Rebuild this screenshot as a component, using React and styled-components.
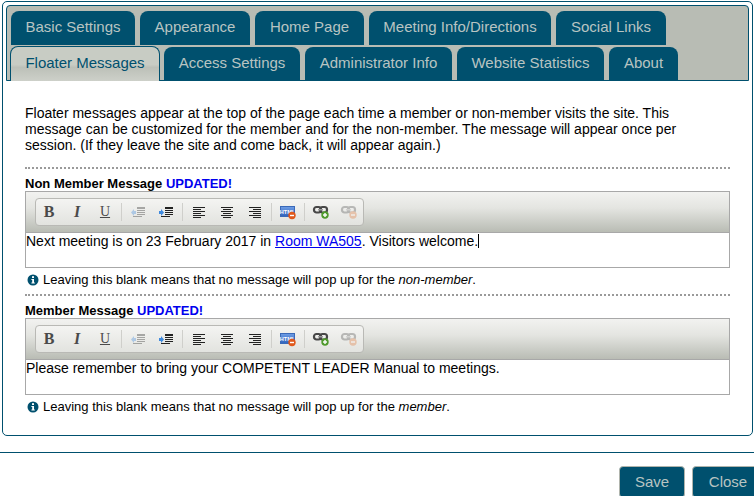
import React from 'react';
import styled, { createGlobalStyle } from 'styled-components';

const Global = createGlobalStyle`
  html, body { margin: 0; padding: 0; background: #fff; overflow: hidden; }
  body { font-family: "Liberation Sans", Arial, sans-serif; color: #000; }
`;

const Page = styled.div`
  width: 754px;
  height: 496px;
  overflow: hidden;
`;

const Panel = styled.div`
  box-sizing: border-box;
  width: 751px;
  height: 435px;
  margin: 1px 0 0 2px;
  padding: 3px;
  border: 1px solid #00506e;
  border-radius: 5px;
`;

const TabHeader = styled.div`
  box-sizing: border-box;
  width: 743px;
  height: 76px;
  padding: 5px 0 0 4px;
  background: #b8bcb4;
  border: 1px solid #00506e;
  border-radius: 4px 4px 0 0;
`;

const TabRow = styled.div`
  display: flex;
  gap: 5px;
  height: ${(p) => p.$h}px;
`;

// 선택된 탭은 아래 테두리를 덮는다
const Tab = styled.div`
  box-sizing: border-box;
  flex: none;
  height: ${(p) => (p.$active ? '35px' : `${p.$h}px`)};
  margin-top: ${(p) => (p.$active ? '0' : `${p.$top}px`)};
  margin-left: ${(p) => (p.$active ? '-1px' : '0')};
  margin-right: ${(p) => (p.$active ? '-1px' : '0')};
  width: ${(p) => p.$w}px;
  text-align: center;
  font-size: 15px;
  line-height: 31px;
  border-radius: 8px 8px 0 0;
  background: ${(p) =>
    p.$active ? 'linear-gradient(#c8ccc4 0, #c8ccc4 52%, #bcc0b8 60%, #cdd0c9 100%)' : '#00506e'};
  color: ${(p) => (p.$active ? '#00506e' : '#b8c4c2')};
  border: ${(p) => (p.$active ? '1px solid #00506e' : '0')};
  border-bottom: 0;
`;

const Content = styled.div`
  padding: 25px 19px 0 19px;
`;

const Intro = styled.p`
  margin: 0;
  font-size: 14px;
  line-height: 15.8px;
  height: 48px;
  width: 690px;
`;

const Divider = styled.div`
  height: 0;
  border-top: 2px dotted #9a9a9a;
  width: 705px;
  margin-top: ${(p) => p.$top}px;
`;

const Label = styled.div`
  font-size: 13px;
  font-weight: bold;
  line-height: 15px;
  margin: 7px 0 0 0;
`;

const Updated = styled.span`
  color: #0000ee;
`;

const Editor = styled.div`
  box-sizing: border-box;
  width: 705px;
  border: 1px solid #a8a8a8;
  height: 77px;
`;

const ToolArea = styled.div`
  box-sizing: border-box;
  height: 41px;
  padding: 6px 0 0 9px;
  background: linear-gradient(#f2f2f0 0, #e4e5e1 40%, #b9bcb4 100%);
  border-bottom: 1px solid #a8a8a8;
`;

const ToolPill = styled.div`
  box-sizing: border-box;
  display: flex;
  align-items: center;
  width: 329px;
  height: 28px;
  background: linear-gradient(#f4f4f2, #e2e3df);
  border: 1px solid #b9b9b5;
  border-radius: 4px;
`;

const ToolButton = styled.span`
  display: flex;
  align-items: center;
  justify-content: center;
  flex: none;
  width: 28px;
  height: 26px;
  font-family: "Liberation Serif", serif;
  font-size: ${(p) => (p.$under ? '14px' : '16px')};
  color: #4a4a4a;
  font-weight: ${(p) => (p.$bold ? 'bold' : 'normal')};
  font-style: ${(p) => (p.$italic ? 'italic' : 'normal')};
  text-decoration: ${(p) => (p.$under ? 'underline' : 'none')};
  &:first-child { margin-left: -1px; }
`;

const ToolSep = styled.span`
  flex: none;
  width: 1px;
  height: 18px;
  background: #cfcfcb;
  margin: 0 2px;
`;

const EditArea = styled.div`
  font-size: 14px;
  line-height: 16px;
  a { color: #0000ee; }
`;

const Caret = styled.span`
  display: inline-block;
  width: 1px;
  height: 14px;
  background: #000;
  vertical-align: -2px;
`;

const Note = styled.div`
  display: flex;
  align-items: center;
  gap: 4px;
  font-size: 13px;
  line-height: 15px;
  margin: 4px 0 0 2px;
`;

const Footer = styled.div`
  margin-top: 16px;
  border-top: 1px solid #00506e;
  display: flex;
  gap: 7px;
  padding: 13px 0 0 619px;
  width: 300px;
`;

const ActionButton = styled.div`
  box-sizing: border-box;
  flex: none;
  width: ${(p) => p.$w}px;
  height: 32px;
  background: #00506e;
  color: #b8c4c2;
  border: 1px solid #b0b4ac;
  border-radius: 4px;
  text-align: center;
  font-size: 15px;
  line-height: 29px;
`;

const offsets = {
  left: [0, 0, 0, 0, 0, 0],
  center: [0, 2, 0, 2, 0, 2],
  right: [0, 4, 0, 4, 0, 4],
};

const AlignIcon = ({ kind }) => (
  <svg width="14" height="13" viewBox="0 0 14 13">
    {offsets[kind].map((x, i) => (
      <rect key={i} x={x + 1} y={i * 2 + 1} width={i % 2 ? 8 : 12} height="1" fill="#222" />
    ))}
  </svg>
);

// 내어쓰기 / 들여쓰기
const IndentIcon = ({ out }) => (
  <svg width="16" height="13" viewBox="0 0 16 13" opacity={out ? 0.35 : 1}>
    <rect x="7" y="1" width="8" height="2" fill="#222" />
    <rect x="7" y="4" width="8" height="1" fill="#222" />
    <rect x="7" y="6" width="8" height="1" fill="#222" />
    <rect x="7" y="8" width="8" height="1" fill="#222" />
    <rect x="3" y="10" width="9" height="1" fill="#222" />
    <path
      d={out ? 'M6 5v3H4v2L1 6.500 4 3v2z' : 'M1 5h2V3l3 3.500-3 3.500V8H1z'}
      fill="#3f8ade"
    />
  </svg>
);

const HtmlIcon = () => (
  <svg width="18" height="16" viewBox="0 0 18 16">
    <defs>
      <linearGradient id="htmlBlue" x1="0" y1="0" x2="0" y2="1">
        <stop offset="0" stopColor="#6f9ee6" />
        <stop offset="1" stopColor="#2f62bb" />
      </linearGradient>
    </defs>
    <rect x="1.500" y="2.500" width="14" height="10" fill="url(#htmlBlue)" stroke="#3a69b8" />
    <text x="8.500" y="10" fontSize="5.500" fontWeight="bold" textAnchor="middle" fill="#fff" fontFamily="Liberation Sans">HTML</text>
    <circle cx="13" cy="11.500" r="3.700" fill="#e0591c" />
    <rect x="11" y="10.800" width="4" height="1.400" fill="#fff" />
  </svg>
);

const LinkIcon = ({ off }) => (
  <svg width="18" height="16" viewBox="0 0 18 16" opacity={off ? 0.32 : 1}>
    <rect x="2" y="3" width="7" height="5.500" rx="2.500" fill="none" stroke="#474747" strokeWidth="2.200" />
    <rect x="8" y="3" width="7" height="5.500" rx="2.500" fill="none" stroke="#474747" strokeWidth="2.200" />
    <rect x="6" y="5" width="5" height="1.500" fill="#999" />
    <circle cx="13" cy="11" r="3.700" fill={off ? '#e0702c' : '#4f9a2c'} />
    <rect x="11" y="10.300" width="4" height="1.400" fill="#fff" />
    {!off && <rect x="12.300" y="9" width="1.400" height="4" fill="#fff" />}
  </svg>
);

const InfoIcon = () => (
  <svg width="12" height="12" viewBox="0 0 12 12">
    <circle cx="6" cy="6" r="5.500" fill="#00506e" />
    <rect x="5" y="2.200" width="2" height="1.800" fill="#fff" />
    <path d="M4.400 5h2.600v3.400h.8v1H4.400v-1h.8V6h-.8z" fill="#fff" />
  </svg>
);

const Toolbar = () => (
  <ToolArea>
    <ToolPill>
      <ToolButton $bold>B</ToolButton>
      <ToolButton $bold $italic>I</ToolButton>
      <ToolButton $under>U</ToolButton>
      <ToolSep />
      <ToolButton><IndentIcon out /></ToolButton>
      <ToolButton><IndentIcon /></ToolButton>
      <ToolSep />
      <ToolButton><AlignIcon kind="left" /></ToolButton>
      <ToolButton><AlignIcon kind="center" /></ToolButton>
      <ToolButton><AlignIcon kind="right" /></ToolButton>
      <ToolSep />
      <ToolButton><HtmlIcon /></ToolButton>
      <ToolSep />
      <ToolButton><LinkIcon /></ToolButton>
      <ToolButton><LinkIcon off /></ToolButton>
    </ToolPill>
  </ToolArea>
);

const row1 = [['Basic Settings', 124], ['Appearance', 110], ['Home Page', 109], ['Meeting Info/Directions', 182], ['Social Links', 110]];
const row2 = [['Floater Messages', 150, true], ['Access Settings', 136], ['Administrator Info', 147], ['Website Statistics', 147], ['About', 69]];

const App = () => (
  <Page>
    <Global />
    <Panel>
      <TabHeader>
        <TabRow $h={35}>
          {row1.map(([t, w]) => <Tab key={t} $w={w} $h={34} $top={0}>{t}</Tab>)}
        </TabRow>
        <TabRow $h={34}>
          {row2.map(([t, w, a]) => <Tab key={t} $w={w} $h={33} $top={1} $active={a}>{t}</Tab>)}
        </TabRow>
      </TabHeader>
      <Content>
        <Intro>
          Floater messages appear at the top of the page each time a member or non-member visits the site. This
          message can be customized for the member and for the non-member. The message will appear once per
          session. (If they leave the site and come back, it will appear again.)
        </Intro>
        <Divider $top={13} />
        <Label>Non Member Message <Updated>UPDATED!</Updated></Label>
        <Editor>
          <Toolbar />
          <EditArea>
            Next meeting is on 23 February 2017 in <a href="#room">Room WA505</a>. Visitors welcome.<Caret />
          </EditArea>
        </Editor>
        <Note><InfoIcon /><span>Leaving this blank means that no message will pop up for the <em>non-member</em>.</span></Note>
        <Divider $top={7} />
        <Label>Member Message <Updated>UPDATED!</Updated></Label>
        <Editor>
          <Toolbar />
          <EditArea>Please remember to bring your COMPETENT LEADER Manual to meetings.</EditArea>
        </Editor>
        <Note><InfoIcon /><span>Leaving this blank means that no message will pop up for the <em>member</em>.</span></Note>
      </Content>
    </Panel>
    <Footer>
      <ActionButton $w={66}>Save</ActionButton>
      <ActionButton $w={72}>Close</ActionButton>
    </Footer>
  </Page>
);

export default App;
